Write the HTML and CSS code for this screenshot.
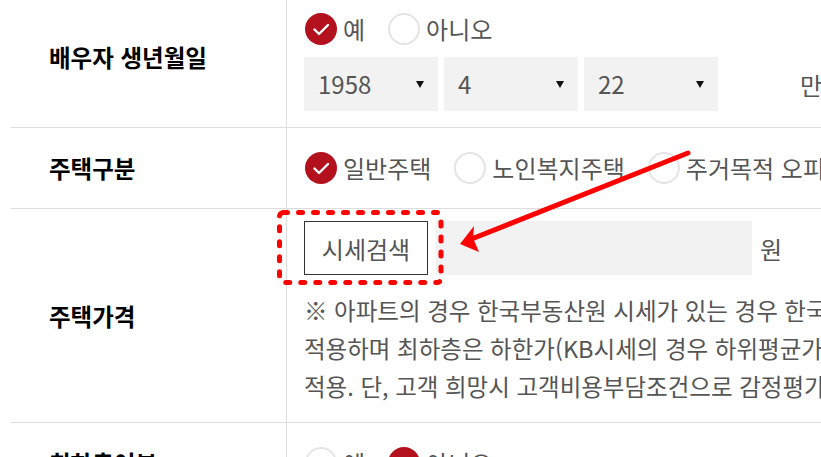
FILE: index.html
```html
<!DOCTYPE html>
<html lang="ko">
<head>
    <meta charset="UTF-8">
    <title>주택정보 입력</title>
    <link rel="stylesheet" href="styles.css">
</head>
<body>
<div class="form">
    <div class="row">
        <div class="label">배우자 생년월일</div>
        <div class="field field-birth">
            <div class="radios">
                <label class="radio on"><span class="dot"><svg viewBox="0 0 32 32" width="32" height="32"><path d="M9.5 16.5 L14 21 L23 12" fill="none" stroke="#fff" stroke-width="2.4" stroke-linecap="round" stroke-linejoin="round"/></svg></span>예</label>
                <label class="radio"><span class="dot"></span>아니오</label>
            </div>
            <div class="dates">
                <div class="select">1958<span class="caret"></span></div>
                <div class="select">4<span class="caret"></span></div>
                <div class="select">22<span class="caret"></span></div>
                <span class="age">만 64세</span>
            </div>
        </div>
    </div>
    <div class="row">
        <div class="label">주택구분</div>
        <div class="field field-radio">
            <div class="radios">
                <label class="radio on"><span class="dot"><svg viewBox="0 0 32 32" width="32" height="32"><path d="M9.5 16.5 L14 21 L23 12" fill="none" stroke="#fff" stroke-width="2.4" stroke-linecap="round" stroke-linejoin="round"/></svg></span>일반주택</label>
                <label class="radio"><span class="dot"></span>노인복지주택</label>
                <label class="radio"><span class="dot"></span>주거목적 오피스텔</label>
            </div>
        </div>
    </div>
    <div class="row">
        <div class="label">주택가격</div>
        <div class="field field-price">
            <div class="price">
                <button class="btn">시세검색</button>
                <div class="input"></div>
                <span class="unit">원</span>
            </div>
            <p class="note">※ 아파트의 경우 한국부동산원 시세가 있는 경우 한국부동산원 시세 중 일반평균가를<br>
                적용하며 최하층은 하한가(KB시세의 경우 하위평균가)를 적용합니다.<br>
                적용. 단, 고객 희망시 고객비용부담조건으로 감정평가 금액을 적용</p>
        </div>
    </div>
    <div class="row">
        <div class="label">최하층여부</div>
        <div class="field field-radio">
            <div class="radios">
                <label class="radio"><span class="dot"></span>예</label>
                <label class="radio on"><span class="dot"><svg viewBox="0 0 32 32" width="32" height="32"><path d="M9.5 16.5 L14 21 L23 12" fill="none" stroke="#fff" stroke-width="2.4" stroke-linecap="round" stroke-linejoin="round"/></svg></span>아니오</label>
            </div>
        </div>
    </div>
</div>

<!-- annotation marks drawn over the page -->
<svg class="marks" width="821" height="457" viewBox="0 0 821 457">
    <rect x="279.5" y="212.5" width="161.5" height="70" rx="4" fill="none" stroke="#ff0000" stroke-width="5" stroke-dasharray="4 11" stroke-linecap="round"/>
    <line x1="688" y1="153" x2="474" y2="238" stroke="#ff0000" stroke-width="5" stroke-linecap="round"/>
    <polygon points="460,244 474,226 473,238 479,252" fill="#ff0000"/>
</svg>
</body>
</html>
```

FILE: styles.css
```css
*{padding: 0px; margin: 0px; box-sizing: border-box}
body {
    width: 821px;
    height: 457px;
    overflow: hidden;
    position: relative;
    background: #ffffff;
    font-family: "Noto Sans CJK KR", "Noto Sans", sans-serif;
    color: #555555;
}
.form {
    width: 1200px;
    margin: -14px 0 0 11px;
}
.row {
    display: flex;
    border-bottom: 1px solid #dddddd;
}
.label {
    width: 276px;
    flex: none;
    border-right: 1px solid #dddddd;
    display: flex;
    align-items: center;
    padding-left: 38px;
    font-size: 23.5px;
    font-weight: 700;
    color: #000000;
}
.field {
    flex: 1;
    padding-left: 17px;
}
.field-birth {
    padding-top: 27px;
    padding-bottom: 16px;
}
.field-radio {
    padding-top: 24px;
    padding-bottom: 24px;
}
.field-price {
    padding-top: 12px;
    padding-bottom: 17px;
}
.radios {
    display: flex;
    gap: 22px;
    height: 32px;
}
.radio {
    display: flex;
    align-items: center;
    gap: 6px;
    font-size: 24px;
    line-height: 32px;
    white-space: nowrap;
}
.dot {
    width: 32px;
    height: 32px;
    border-radius: 50%;
    border: 2px solid #e4e4e4;
    background: #ffffff;
    display: block;
    margin-left: 1px;
}
.radio.on .dot {
    border: none;
    background: #b4111e;
}
.dot svg {
    display: block;
}
.dates {
    display: flex;
    align-items: center;
    gap: 6px;
    margin-top: 12px;
}
.select {
    width: 134px;
    height: 54px;
    background: #f2f2f2;
    position: relative;
    padding-left: 14px;
    font-size: 24px;
    line-height: 54px;
    color: #555555;
}
.caret {
    position: absolute;
    right: 14px;
    top: 24px;
    width: 0;
    height: 0;
    border-left: 4px solid transparent;
    border-right: 4px solid transparent;
    border-top: 7px solid #111111;
}
.age {
    margin-left: 76px;
    font-size: 24px;
    white-space: nowrap;
}
.price {
    display: flex;
    align-items: center;
    height: 54px;
}
.btn {
    width: 124px;
    height: 54px;
    border: 1px solid #333333;
    background: #ffffff;
    font-family: inherit;
    font-size: 24px;
    color: #555555;
}
.input {
    width: 316px;
    height: 54px;
    margin-left: 8px;
    background: #f2f2f2;
}
.unit {
    margin-left: 8px;
    font-size: 24px;
}
.note {
    margin-top: 16px;
    font-size: 23.5px;
    line-height: 38px;
    white-space: nowrap;
}
.marks {
    position: absolute;
    left: 0px;
    top: 0px;
    pointer-events: none;
}
```
